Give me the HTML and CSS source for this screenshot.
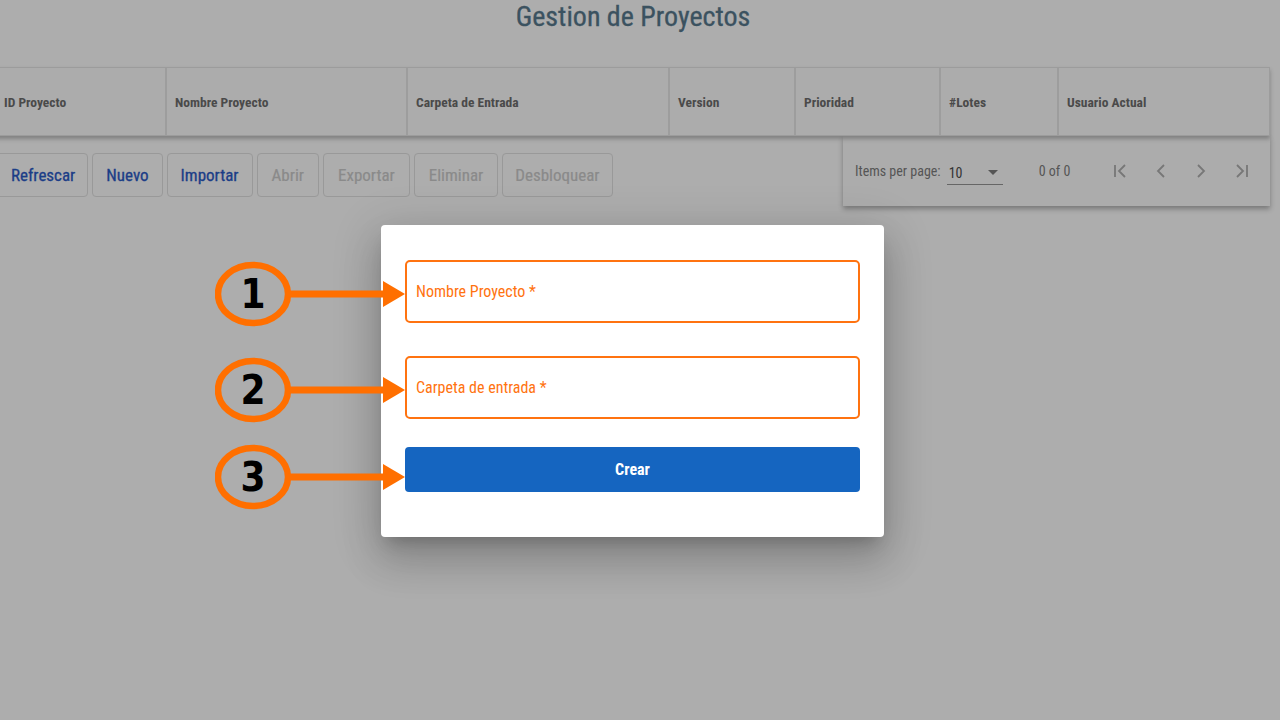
FILE: index.html
```html
<!DOCTYPE html>
<html lang="es">
<head>
<meta charset="utf-8">
<title>Gestion de Proyectos</title>
<link rel="stylesheet" href="styles.css">
</head>
<body>
<div class="page">
  <h1 class="title">Gestion de Proyectos</h1>
  <div class="table-head">
    <div class="th c1">ID Proyecto</div>
    <div class="th c2">Nombre Proyecto</div>
    <div class="th c3">Carpeta de Entrada</div>
    <div class="th c4">Version</div>
    <div class="th c5">Prioridad</div>
    <div class="th c6">#Lotes</div>
    <div class="th c7">Usuario Actual</div>
  </div>
  <div class="below">
    <div class="actions">
      <button class="btn">Refrescar</button>
      <button class="btn">Nuevo</button>
      <button class="btn">Importar</button>
      <button class="btn off">Abrir</button>
      <button class="btn off">Exportar</button>
      <button class="btn off">Eliminar</button>
      <button class="btn off">Desbloquear</button>
    </div>
    <div class="paginator">
      <span class="ipp">Items per page:</span>
      <span class="select"><span>10</span><span class="caret"></span></span>
      <span class="range">0 of 0</span>
      <span class="navs">
        <svg class="nav" viewBox="0 0 24 24"><path d="M6 6v12M16 6l-6 6 6 6"/></svg>
        <svg class="nav" viewBox="0 0 24 24"><path d="M15 6l-6 6 6 6"/></svg>
        <svg class="nav" viewBox="0 0 24 24"><path d="M9 6l6 6-6 6"/></svg>
        <svg class="nav" viewBox="0 0 24 24"><path d="M8 6l6 6-6 6M18 6v12"/></svg>
      </span>
    </div>
  </div>

  <div class="modal">
    <div class="field"><span class="label">Nombre Proyecto *</span></div>
    <div class="field"><span class="label">Carpeta de entrada *</span></div>
    <button class="create">Crear</button>
  </div>

  <div class="callout n1">
    <svg viewBox="0 0 200 70" width="200" height="70"><ellipse cx="38" cy="35" rx="35" ry="29"/><path class="line" d="M73 35H172"/><path class="head" d="M168 22L190 35L168 48Z"/></svg>
    <span class="num">1</span>
  </div>
  <div class="callout n2">
    <svg viewBox="0 0 200 70" width="200" height="70"><ellipse cx="38" cy="35" rx="35" ry="29"/><path class="line" d="M73 35H172"/><path class="head" d="M168 22L190 35L168 48Z"/></svg>
    <span class="num">2</span>
  </div>
  <div class="callout n3">
    <svg viewBox="0 0 200 70" width="200" height="70"><ellipse cx="38" cy="35" rx="35" ry="29"/><path class="line" d="M73 35H172"/><path class="head" d="M168 22L190 35L168 48Z"/></svg>
    <span class="num">3</span>
  </div>
</div>
</body>
</html>
```

FILE: styles.css
```css
* { box-sizing: border-box; }
html, body { margin: 0; padding: 0; }
body {
  width: 1280px;
  height: 720px;
  overflow: hidden;
  background: #adadad;
  font-family: "Roboto Condensed", "Liberation Sans Narrow", Roboto, sans-serif;
}
.page { position: relative; width: 1280px; height: 720px; }
.title {
  margin: 0;
  height: 67px;
  padding-right: 14px;
  line-height: 34px;
  text-align: center;
  font-weight: 400;
  font-size: 28px;
  color: #3b5260;
  -webkit-text-stroke: 0.3px #3b5260;
}
.table-head {
  display: flex;
  margin-left: -10px;
  width: 1280px;
  height: 69px;
  border: 1px solid #9c9c9c;
  background: #acacac;
  box-shadow: 0 3px 4px rgba(0,0,0,0.25);
  position: relative;
  z-index: 1;
}
.th {
  display: flex;
  align-items: center;
  padding-left: 8px;
  border-right: 2px solid #9d9d9d;
  font-size: 13.5px;
  font-weight: 700;
  color: #4a4a4a;
}
.th:last-child { border-right: none; }
.c1 { width: 176px; padding-left: 13px; }
.c2 { width: 241px; }
.c3 { width: 262px; }
.c4 { width: 126px; }
.c5 { width: 145px; }
.c6 { width: 118px; }
.c7 { flex: 1; }
.below {
  display: flex;
  justify-content: space-between;
  align-items: flex-start;
  width: 1270px;
}
.actions {
  display: flex;
  gap: 4px;
  margin-top: 17px;
  margin-left: -4px;
}
.btn {
  height: 44px;
  padding: 0 13px;
  border: 1px solid #999;
  border-radius: 4px;
  background: #adadad;
  font-family: inherit;
  font-size: 17px;
  color: #1b3d87;
  -webkit-text-stroke: 0.3px #1b3d87;
}
.btn:first-child { padding: 0 12px 0 14px; }
.btn.off { padding: 0 14px; color: #8a8a8a; -webkit-text-stroke: 0.2px #8a8a8a; }
.btn.off:last-child { padding: 0 12px; }
.paginator {
  display: flex;
  align-items: center;
  width: 427px;
  height: 70px;
  padding-left: 12px;
  background: #acacac;
  box-shadow: 0 3px 5px rgba(0,0,0,0.3);
  font-size: 14px;
  color: #555;
}
.ipp { margin-right: 6px; }
.select {
  display: flex;
  align-items: center;
  justify-content: space-between;
  width: 56px;
  height: 24px;
  padding: 0 2px;
  margin-top: 4px;
  border-bottom: 1px solid #666;
  color: #333;
}
.caret {
  width: 0; height: 0;
  border-left: 5px solid transparent;
  border-right: 5px solid transparent;
  border-top: 5px solid #555;
  margin-right: 3px;
}
.range { margin-left: 36px; }
.navs { display: flex; gap: 16px; margin-left: 39px; }
.nav {
  width: 24px; height: 24px;
  fill: none;
  stroke: #777;
  stroke-width: 1.8;
}
.modal {
  position: absolute;
  left: 381px;
  top: 225px;
  width: 503px;
  height: 312px;
  padding: 35px 24px 0;
  background: #fff;
  border-radius: 4px;
  box-shadow: 0 11px 15px -7px rgba(0,0,0,.2), 0 24px 38px 3px rgba(0,0,0,.14), 0 9px 46px 8px rgba(0,0,0,.12);
  display: flex;
  flex-direction: column;
}
.field {
  height: 63px;
  border: 2px solid #ff7310;
  border-radius: 5px;
  display: flex;
  align-items: center;
  padding-left: 9px;
  margin-bottom: 33px;
}
.field + .field { margin-bottom: 28px; }
.label { font-size: 16px; color: #ff7310; margin-top: -1px; }
.create {
  height: 45px;
  border: none;
  border-radius: 4px;
  background: #1565c0;
  color: #fff;
  font-family: inherit;
  font-weight: 700;
  font-size: 16px;
}
.callout { position: absolute; left: 215px; width: 200px; height: 70px; }
.callout svg { display: block; }
.callout ellipse { fill: none; stroke: #ff6f00; stroke-width: 6.5; }
.callout .line { stroke: #ff6f00; stroke-width: 7; }
.callout .head { fill: #ff6f00; }
.n1 { top: 259px; }
.n2 { top: 355px; }
.n3 { top: 442px; }
.num {
  position: absolute;
  left: 0;
  top: 0;
  width: 76px;
  height: 70px;
  display: flex;
  align-items: center;
  justify-content: center;
  font-family: "Liberation Sans Narrow", "DejaVu Sans Condensed", sans-serif;
  font-weight: 700;
  font-size: 40px;
  color: #000;
}
```
